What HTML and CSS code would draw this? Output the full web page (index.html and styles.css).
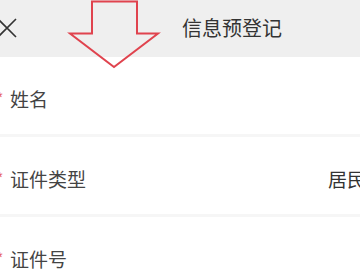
FILE: index.html
```html
<!DOCTYPE html>
<html lang="zh-CN">
<head>
<meta charset="utf-8">
<link rel="stylesheet" href="styles.css">
</head>
<body>
<div class="page">
  <header class="header">
    <svg class="close" viewBox="0 0 20 20" width="20" height="20">
      <path d="M1 1 L19 19 M19 1 L1 19" stroke="#333" stroke-width="1.6" fill="none"/>
    </svg>
    <h1 class="title">信息预登记</h1>
    <svg class="arrow" viewBox="0 0 360 70" width="360" height="70">
      <polygon points="92,1.5 137,1.5 137,33.5 158,33.5 114,67 70,33.5 92,33.5" fill="none" stroke="#e0434e" stroke-width="2"/>
    </svg>
  </header>
  <div class="row">
    <span class="req">*</span><span class="label">姓名</span>
  </div>
  <div class="row">
    <span class="req">*</span><span class="label">证件类型</span><span class="value">居民身份证</span>
  </div>
  <div class="row">
    <span class="req">*</span><span class="label">证件号</span>
  </div>
</div>
</body>
</html>
```
FILE: styles.css
```css
html, body {
  margin: 0;
  padding: 0;
  background: #ffffff;
}
.page {
  width: 360px;
  height: 270px;
  overflow: hidden;
  position: relative;
  font-family: "Noto Sans CJK SC", "Noto Sans", sans-serif;
}
.header {
  height: 57px;
  background: #efefef;
  display: flex;
  align-items: center;
  position: relative;
}
.close {
  margin-left: -3px;
  margin-top: -2px;
  flex: none;
}
.title {
  margin: 0 0 0 165px;
  font-size: 20px;
  font-weight: normal;
  color: #333333;
  line-height: 1;
  margin-top: -2px;
  white-space: nowrap;
}
.arrow {
  position: absolute;
  left: 0;
  top: 0;
}
.row {
  height: 80px;
  box-sizing: border-box;
  padding-top: 5px;
  border-bottom: 3px solid #f6f6f6;
  display: flex;
  align-items: center;
  white-space: nowrap;
}
.req {
  width: 8px;
  margin-left: -4px;
  color: #e8646a;
  font-size: 16px;
  line-height: 1;
  flex: none;
  text-align: left;
}
.label {
  font-size: 19px;
  color: #444444;
  margin-left: 6px;
  width: 318px;
  flex: none;
}
.value {
  font-size: 19px;
  color: #333333;
  flex: none;
}
```
